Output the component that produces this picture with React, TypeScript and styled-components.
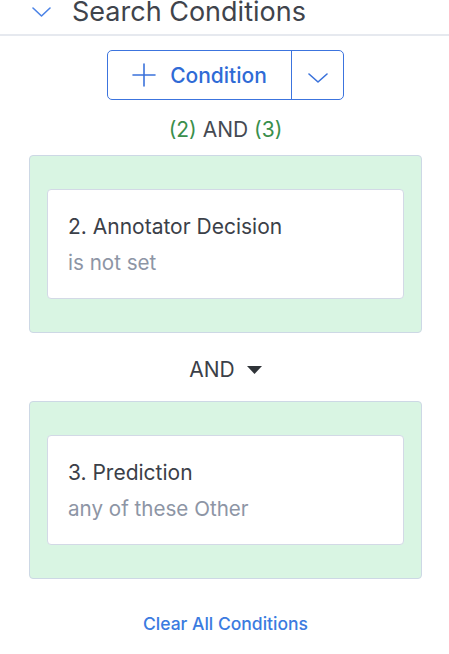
import React from "react";
import styled, { createGlobalStyle } from "styled-components";

const Global = createGlobalStyle`
  html, body { margin: 0; padding: 0; background: #ffffff; }
  body { font-family: Inter, Roboto, "Liberation Sans", sans-serif; color: #3b4048; }
  * { box-sizing: border-box; }
`;

const Page = styled.div`
  width: 449px;
  min-height: 654px;
  background: #fff;
`;

const Header = styled.div`
  display: flex;
  align-items: center;
  height: 36px;
  padding: 0 0 10px 32px;
  border-bottom: 2px solid #e6e9ef;
`;

const HeaderTitle = styled.h2`
  margin: 0 0 0 21px;
  font-size: 27px;
  line-height: 24px;
  font-weight: 400;
  color: #3f444c;
  letter-spacing: 0;
`;

const Content = styled.div`
  display: flex;
  flex-direction: column;
  align-items: center;
  padding: 0 27px 0 29px;
`;

const SplitButton = styled.div`
  margin-top: 14px;
  display: flex;
  height: 50px;
  border: 1.5px solid #3c74de;
  border-radius: 5px;
  overflow: hidden;
`;

const MainPart = styled.button`
  width: 183px;
  display: flex;
  align-items: center;
  justify-content: center;
  gap: 14px;
  border: none;
  background: transparent;
  color: #2f6bd6;
  font-family: inherit;
  font-size: 21px;
  font-weight: 500;
  padding: 0;
  cursor: pointer;
`;

const DropPart = styled.button`
  width: 52px;
  display: flex;
  align-items: center;
  justify-content: center;
  border: none;
  border-left: 1.5px solid #3c74de;
  background: transparent;
  padding: 6px 0 0 0;
  cursor: pointer;
`;

const Summary = styled.div`
  margin-top: 18px;
  font-size: 21px;
  line-height: 24px;
  color: #454a52;
`;

const Ref = styled.span`
  color: #3a8f4c;
`;

const Group = styled.div`
  width: 100%;
  margin-top: ${(p: { $top?: number }) => p.$top ?? 0}px;
  padding: 33px 17px;
  background: #d9f5e3;
  border: 1px solid #cdd8e5;
  border-radius: 4px;
`;

const CondCard = styled.div`
  background: #fff;
  border: 1px solid #d3d9e6;
  border-radius: 4px;
  padding: 23px 20px 21px;
`;

const CondTitle = styled.div`
  font-size: 21px;
  line-height: 28px;
  color: #3b4048;
`;

const CondSub = styled.div`
  margin-top: 8px;
  font-size: 20.6px;
  line-height: 28px;
  color: #8d95a5;
`;

const Operator = styled.div`
  display: flex;
  align-items: center;
  gap: 12px;
  margin: 25px 0 19px;
  font-size: 21px;
  line-height: 24px;
  color: #3b4048;
  cursor: pointer;
`;

const ClearLink = styled.a`
  margin-top: 35px;
  font-size: 17.5px;
  line-height: 20px;
  font-weight: 500;
  color: #3b7be0;
  text-decoration: none;
  cursor: pointer;
`;

const Chevron = ({ w, h, color }: { w: number; h: number; color: string }) => (
  <svg width={w} height={h} viewBox={`0 0 ${w} ${h}`} fill="none">
    <path
      d={`M1 1 L${w / 2} ${h - 1} L${w - 1} 1`}
      stroke={color}
      strokeWidth={1.6}
      strokeLinecap="round"
      strokeLinejoin="round"
    />
  </svg>
);

const Plus = () => (
  <svg width="24" height="24" viewBox="0 0 24 24" fill="none">
    <path d="M12 1 V23 M1 12 H23" stroke="#3a72db" strokeWidth={1.6} strokeLinecap="round" />
  </svg>
);

const Caret = () => (
  <svg width="15" height="8" viewBox="0 0 15 8">
    <path d="M0 0 H15 L7.5 8 Z" fill="#2f3338" />
  </svg>
);

const conditions = [
  { title: "2. Annotator Decision", sub: "is not set" },
  { title: "3. Prediction", sub: "any of these Other" },
];

export default function App() {
  return (
    <Page>
      <Global />
      <Header>
        <Chevron w={19} h={10} color="#4b83e6" />
        <HeaderTitle>Search Conditions</HeaderTitle>
      </Header>
      <Content>
        <SplitButton>
          <MainPart>
            <Plus />
            Condition
          </MainPart>
          <DropPart>
            <Chevron w={20} h={10} color="#3a72db" />
          </DropPart>
        </SplitButton>
        <Summary>
          <Ref>(2)</Ref> AND <Ref>(3)</Ref>
        </Summary>
        <Group $top={13}>
          <CondCard>
            <CondTitle>{conditions[0].title}</CondTitle>
            <CondSub>{conditions[0].sub}</CondSub>
          </CondCard>
        </Group>
        <Operator>
          AND
          <Caret />
        </Operator>
        <Group>
          <CondCard>
            <CondTitle>{conditions[1].title}</CondTitle>
            <CondSub>{conditions[1].sub}</CondSub>
          </CondCard>
        </Group>
        <ClearLink>Clear All Conditions</ClearLink>
      </Content>
    </Page>
  );
}
